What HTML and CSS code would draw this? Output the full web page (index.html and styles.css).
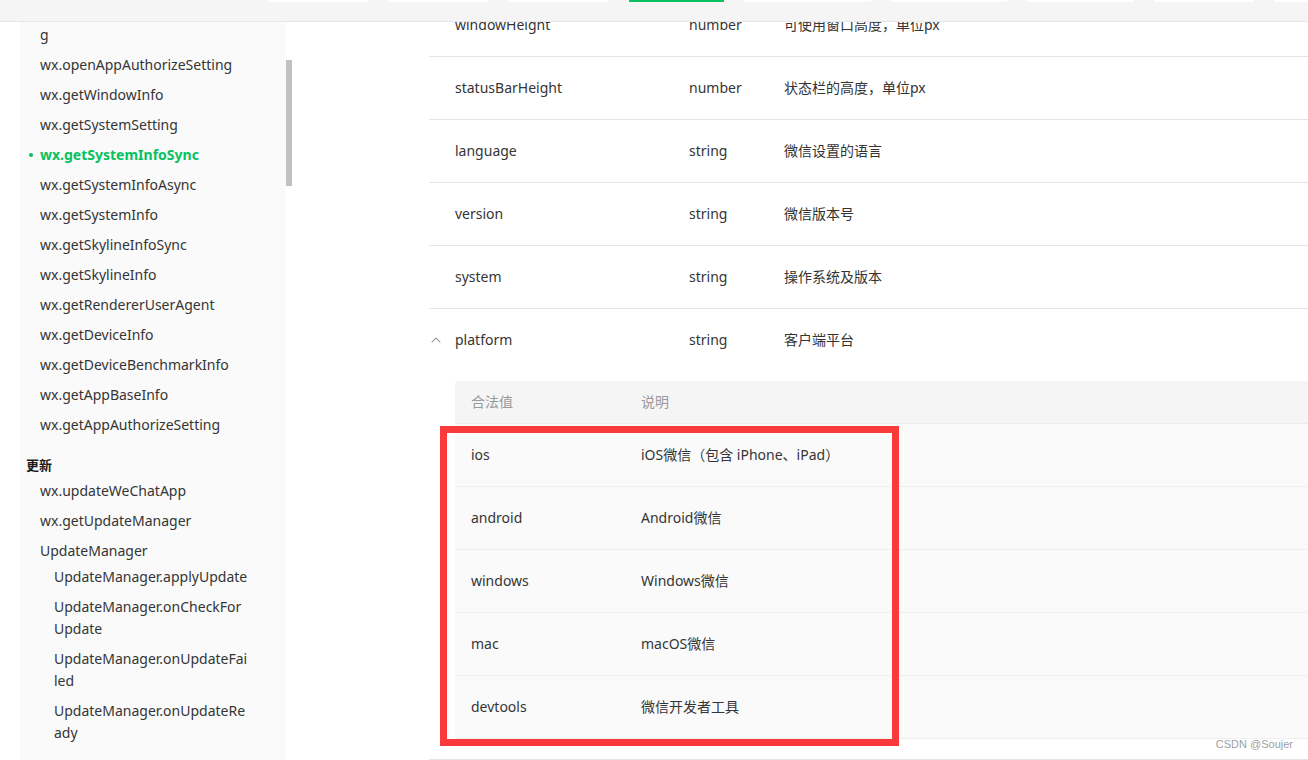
FILE: index.html
```html
<!DOCTYPE html>
<html lang="zh-CN">
<head>
<meta charset="utf-8">
<title>wx.getSystemInfoSync</title>
<link rel="stylesheet" href="styles.css">
</head>
<body>
<header class="topbar">
  <div class="tabs">
    <span class="tab"></span><span class="tab"></span><span class="tab"></span><span class="tab active"></span><span class="tab"></span><span class="tab"></span><span class="tab"></span><span class="tab"></span><span class="tab"></span>
  </div>
</header>
<div class="main">
  <aside class="sidebar">
    <nav class="menu">
      <div class="item">wx.openSystemBluetoothSettin<br>g</div>
      <div class="item">wx.openAppAuthorizeSetting</div>
      <div class="item">wx.getWindowInfo</div>
      <div class="item">wx.getSystemSetting</div>
      <div class="item active">wx.getSystemInfoSync</div>
      <div class="item">wx.getSystemInfoAsync</div>
      <div class="item">wx.getSystemInfo</div>
      <div class="item">wx.getSkylineInfoSync</div>
      <div class="item">wx.getSkylineInfo</div>
      <div class="item">wx.getRendererUserAgent</div>
      <div class="item">wx.getDeviceInfo</div>
      <div class="item">wx.getDeviceBenchmarkInfo</div>
      <div class="item">wx.getAppBaseInfo</div>
      <div class="item">wx.getAppAuthorizeSetting</div>
      <div class="group">更新</div>
      <div class="item">wx.updateWeChatApp</div>
      <div class="item">wx.getUpdateManager</div>
      <div class="item parent">UpdateManager</div>
      <div class="item nested">UpdateManager.applyUpdate</div>
      <div class="item nested">UpdateManager.onCheckFor<br>Update</div>
      <div class="item nested">UpdateManager.onUpdateFai<br>led</div>
      <div class="item nested">UpdateManager.onUpdateRe<br>ady</div>
    </nav>
  </aside>
  <div class="scrollbar"><div class="thumb"></div></div>
  <section class="content">
    <div class="table">
      <div class="row"><div class="rowhead"><div class="cell">windowHeight</div><div class="cell">number</div><div class="cell desc">可使用窗口高度，单位px</div></div></div>
      <div class="row"><div class="rowhead"><div class="cell">statusBarHeight</div><div class="cell">number</div><div class="cell desc">状态栏的高度，单位px</div></div></div>
      <div class="row"><div class="rowhead"><div class="cell">language</div><div class="cell">string</div><div class="cell desc">微信设置的语言</div></div></div>
      <div class="row"><div class="rowhead"><div class="cell">version</div><div class="cell">string</div><div class="cell desc">微信版本号</div></div></div>
      <div class="row"><div class="rowhead"><div class="cell">system</div><div class="cell">string</div><div class="cell desc">操作系统及版本</div></div></div>
      <div class="row expanded">
        <div class="rowhead">
          <div class="cell namecell">
            <span class="chev"><svg width="10" height="6" viewBox="0 0 10 6"><path d="M0.7 5.4 L5 1.1 L9.3 5.4" fill="none" stroke="#9a9a9a" stroke-width="1.1"/></svg></span>
            <span>platform</span>
          </div>
          <div class="cell">string</div>
          <div class="cell desc">客户端平台</div>
        </div>
        <div class="subtable">
          <div class="subhead"><div class="scell">合法值</div><div class="scell">说明</div></div>
          <div class="subrow"><div class="scell">ios</div><div class="scell">iOS微信（包含 iPhone、iPad）</div></div>
          <div class="subrow"><div class="scell">android</div><div class="scell">Android微信</div></div>
          <div class="subrow"><div class="scell">windows</div><div class="scell">Windows微信</div></div>
          <div class="subrow"><div class="scell">mac</div><div class="scell">macOS微信</div></div>
          <div class="subrow"><div class="scell">devtools</div><div class="scell">微信开发者工具</div></div>
          <div class="mark"></div>
        </div>
      </div>
      <div class="row"><div class="rowhead"><div class="cell">SDKVersion</div><div class="cell">string</div><div class="cell desc">客户端基础库版本</div></div></div>
    </div>
  </section>
</div>
<div class="watermark">CSDN @Soujer</div>
</body>
</html>
```
FILE: styles.css
```css
* { box-sizing: border-box; }

body {
  margin: 0;
  width: 1308px;
  height: 760px;
  overflow: hidden;
  position: relative;
  background: #fff;
  color: #353535;
  font-family: "Noto Sans", "Noto Sans CJK SC", sans-serif;
  font-size: 14px;
}

.topbar {
  height: 22px;
  overflow: hidden;
  background: #f5f5f5;
  border-bottom: 1px solid #e7e7e7;
}
.tabs {
  display: flex;
  gap: 20px;
  padding-left: 269px;
}
.tab {
  display: block;
  flex: none;
  width: 100px;
  height: 2px;
  background: #fff;
}
.tab.active { width: 95px; background: #07c160; }
.tab:nth-child(5) { width: 127px; }
.tab:nth-child(6) { width: 116px; }
.tab:nth-child(7) { width: 107px; }

.main {
  display: flex;
  height: 738px;
  overflow: hidden;
}

.sidebar {
  width: 266px;
  margin-left: 20px;
  flex: none;
  background: #fafafa;
  overflow: hidden;
}
.menu {
  margin-top: -20px;
  padding-left: 20px;
  width: 234px;
}
.item {
  line-height: 22px;
  margin-bottom: 8px;
  white-space: nowrap;
}
.item.parent { margin-bottom: 4px; }
.item.nested { margin-left: 14px; }
.item.active {
  position: relative;
  color: #07c160;
  font-weight: 700;
}
.item.active::before {
  content: "";
  position: absolute;
  left: -11px;
  top: 9px;
  width: 4px;
  height: 4px;
  border-radius: 50%;
  background: #07c160;
}
.group {
  margin: 18px 0 4px -14px;
  line-height: 22px;
  font-size: 13px;
  font-weight: 700;
  color: #1a1a1a;
}

.scrollbar {
  width: 6px;
  flex: none;
}
.thumb {
  margin-top: 38px;
  height: 126px;
  background: #c1c1c1;
}

.content {
  flex: 1;
  overflow: hidden;
  padding-left: 137px;
}
.table {
  width: 960px;
  margin-top: -28px;
}
.row {
  border-bottom: 1px solid #e5e5e5;
}
.rowhead {
  display: grid;
  grid-template-columns: 234px 95px 1fr;
  padding: 20px 0;
  line-height: 22px;
}
.cell { padding-left: 26px; white-space: nowrap; }
.desc { color: #333; }
.namecell {
  display: flex;
  align-items: center;
  padding-left: 2px;
}
.chev {
  width: 24px;
  display: flex;
  align-items: center;
}
.chev svg { display: block; }

.subtable {
  position: relative;
  margin: 10px 0 20px 26px;
  background: #fafafa;
  border-radius: 4px;
}
.subhead {
  display: grid;
  grid-template-columns: 170px 1fr;
  padding: 10px 0;
  line-height: 22px;
  color: #9a9a9a;
  background: #f5f5f5;
  border-bottom: 1px solid #ececec;
  border-radius: 4px 4px 0 0;
}
.subrow {
  display: grid;
  grid-template-columns: 170px 1fr;
  padding: 20px 0;
  line-height: 22px;
  border-bottom: 1px solid #efefef;
}
.subrow:last-of-type { border-bottom: 0; }
.scell { padding-left: 16px; }

.mark {
  position: absolute;
  left: -15px;
  top: 45px;
  width: 459px;
  height: 320px;
  border: 7px solid #fa3a3a;
}

.watermark {
  position: absolute;
  right: 15px;
  top: 737px;
  line-height: 14px;
  font-family: "Liberation Sans", Arial, sans-serif;
  font-size: 11px;
  color: #a0a0a0;
}
```
